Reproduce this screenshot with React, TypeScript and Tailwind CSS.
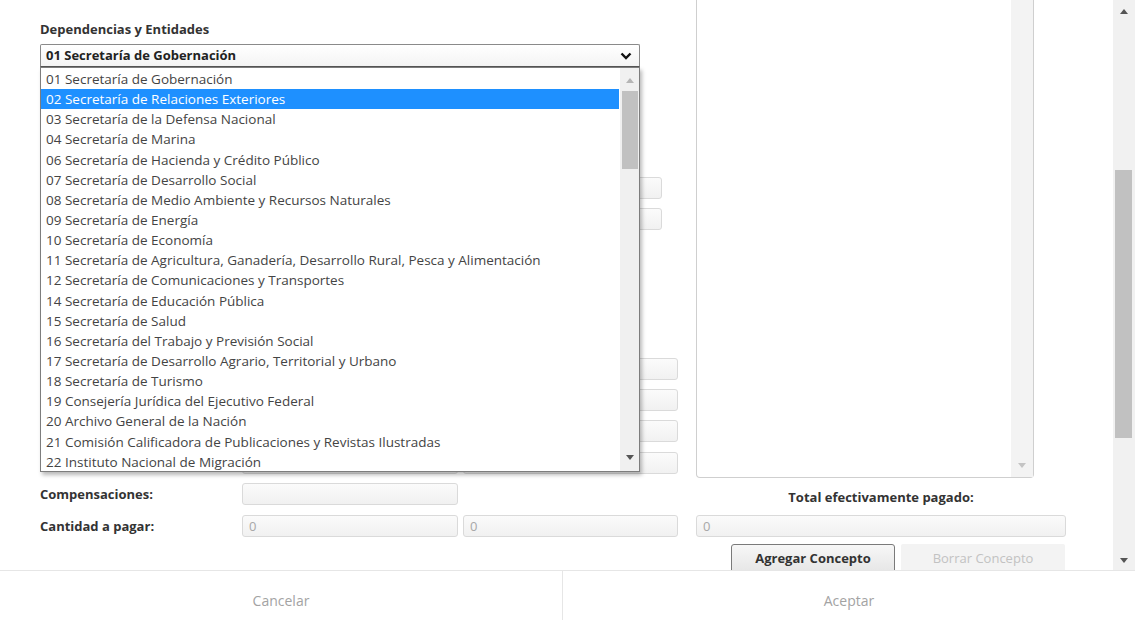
const DEPENDENCIAS = [
  "01 Secretaría de Gobernación",
  "02 Secretaría de Relaciones Exteriores",
  "03 Secretaría de la Defensa Nacional",
  "04 Secretaría de Marina",
  "06 Secretaría de Hacienda y Crédito Público",
  "07 Secretaría de Desarrollo Social",
  "08 Secretaría de Medio Ambiente y Recursos Naturales",
  "09 Secretaría de Energía",
  "10 Secretaría de Economía",
  "11 Secretaría de Agricultura, Ganadería, Desarrollo Rural, Pesca y Alimentación",
  "12 Secretaría de Comunicaciones y Transportes",
  "14 Secretaría de Educación Pública",
  "15 Secretaría de Salud",
  "16 Secretaría del Trabajo y Previsión Social",
  "17 Secretaría de Desarrollo Agrario, Territorial y Urbano",
  "18 Secretaría de Turismo",
  "19 Consejería Jurídica del Ejecutivo Federal",
  "20 Archivo General de la Nación",
  "21 Comisión Calificadora de Publicaciones y Revistas Ilustradas",
  "22 Instituto Nacional de Migración",
];

function Arrow({ up, className }: { up?: boolean; className?: string }) {
  return (
    <svg width="8" height="5" viewBox="0 0 8 5" className={className}>
      <path d={up ? "M0 5 L4 0 L8 5 Z" : "M0 0 L4 5 L8 0 Z"} fill="currentColor" />
    </svg>
  );
}

function Field({ className = "", value }: { className?: string; value?: string }) {
  return (
    <div
      className={`h-[22px] rounded-[3px] border border-[#dadada] bg-gradient-to-b from-[#fbfbfb] to-[#f1f1f1] px-[6px] text-[13px] leading-[20px] text-[#a8a8a8] ${className}`}
    >
      {value}
    </div>
  );
}

/** Hidden form row behind the open dropdown. */
function CoveredRow({ className = "" }: { className?: string }) {
  return (
    <div className={`flex ${className}`}>
      <Field className="ml-[202px] w-[216px]" />
      <Field className="ml-[5px] w-[215px]" />
    </div>
  );
}

function DropdownList() {
  return (
    <div className="absolute left-[40px] top-[67px] h-[405px] w-[600px] border border-[#7d7d7d] bg-white shadow-[2px_3px_4px_rgba(0,0,0,0.28)]">
      <ul className="pr-[20px] pt-px">
        {DEPENDENCIAS.map((d, i) => (
          <li
            key={d}
            className={`h-[20.15px] truncate pl-[5px] text-[13.5px] leading-[20px] ${
              i === 1 ? "bg-[#1e90ff] text-white" : "text-[#444]"
            }`}
          >
            {d}
          </li>
        ))}
      </ul>
      <div className="absolute bottom-0 right-0 top-0 flex w-[19px] flex-col items-center bg-[#f0f0f0]">
        <Arrow up className="mt-[10px] text-[#b5b5b5]" />
        <div className="mt-[8px] h-[78px] w-[16px] bg-[#c1c1c1]" />
        <div className="flex-1" />
        <Arrow className="mb-[11px] text-[#555]" />
      </div>
    </div>
  );
}

function PageScrollbar() {
  return (
    <div className="flex w-[22px] flex-col bg-[#f1f1f1]">
      <div className="flex h-[22px] items-center justify-center">
        <Arrow up className="text-[#555]" />
      </div>
      <div className="ml-[2px] mt-[148px] h-[268px] w-[17px] bg-[#c1c1c1]" />
      <div className="flex-1" />
      <div className="flex h-[20px] items-center justify-center">
        <Arrow className="text-[#555]" />
      </div>
    </div>
  );
}

export default function App() {
  return (
    <div className="flex h-[620px] w-[1135px] flex-col overflow-hidden bg-white font-['Open_Sans',sans-serif] text-[#333]">
      <div className="flex h-[570px]">
        <main className="relative flex-1 overflow-hidden pl-[40px]">
          <div className="flex h-[478px]">
            <div className="w-[640px] pt-[21px]">
              <p className="text-[13px] font-bold leading-[16px] text-[#333]">Dependencias y Entidades</p>
              <div className="mt-[7px] flex h-[23px] w-[600px] items-center justify-between rounded-t-[2px] border border-[#8a8a8a] border-b-[#555] bg-gradient-to-b from-white to-[#f4f4f4] pl-[5px] pr-[7px]">
                <span className="text-[13px] font-bold text-[#222]">01 Secretaría de Gobernación</span>
                <svg width="12" height="8" viewBox="0 0 12 8">
                  <path d="M1.5 1.5 L6 6 L10.5 1.5" fill="none" stroke="#111" strokeWidth="2.4" />
                </svg>
              </div>
              <Field className="ml-[423px] mt-[110px] w-[199px]" />
              <Field className="ml-[423px] mt-[9px] w-[199px]" />
              <CoveredRow className="mt-[128px]" />
              <CoveredRow className="mt-[9px]" />
              <CoveredRow className="mt-[9px]" />
              <CoveredRow className="mt-[10px]" />
            </div>
            <div className="ml-[16px] flex w-[338px] rounded-b-[4px] border-x border-b border-[#cfcfcf] bg-white">
              <div className="flex-1" />
              <div className="flex w-[22px] flex-col items-center justify-end bg-[#f3f3f3] pb-[9px]">
                <Arrow className="text-[#c4c4c4]" />
              </div>
            </div>
          </div>

          <div className="mt-[5px] flex items-start">
            <span className="w-[202px] text-[13px] font-bold leading-[22px]">Compensaciones:</span>
            <Field className="w-[216px]" />
            <span className="ml-[238px] mt-[3px] w-[370px] text-center text-[13px] font-bold leading-[22px]">
              Total efectivamente pagado:
            </span>
          </div>
          <div className="mt-[7px] flex">
            <span className="w-[202px] text-[13px] font-bold leading-[22px]">Cantidad a pagar:</span>
            <Field className="w-[216px]" value="0" />
            <Field className="ml-[5px] w-[215px]" value="0" />
            <Field className="ml-[18px] w-[370px]" value="0" />
          </div>
          <div className="mt-[7px] flex pl-[691px]">
            <button className="h-[29px] w-[164px] rounded-[3px] border border-[#7a7a7a] bg-gradient-to-b from-[#f7f7f7] to-[#e6e6e6] text-[13px] font-bold text-[#333]">
              Agregar Concepto
            </button>
            <button className="ml-[6px] h-[29px] w-[164px] rounded-[2px] bg-[#f3f3f3] text-[13px] text-[#c2c2c2]">
              Borrar Concepto
            </button>
          </div>

          <DropdownList />
        </main>
        <PageScrollbar />
      </div>
      <footer className="flex h-[50px] border-t border-[#e6e6e6]">
        <button className="flex w-[562px] items-center justify-center pt-[10px] text-[14px] text-[#a3a3a3]">
          Cancelar
        </button>
        <button className="flex flex-1 items-center justify-center border-l border-[#e6e6e6] pt-[10px] text-[14px] text-[#a3a3a3]">
          Aceptar
        </button>
      </footer>
    </div>
  );
}
